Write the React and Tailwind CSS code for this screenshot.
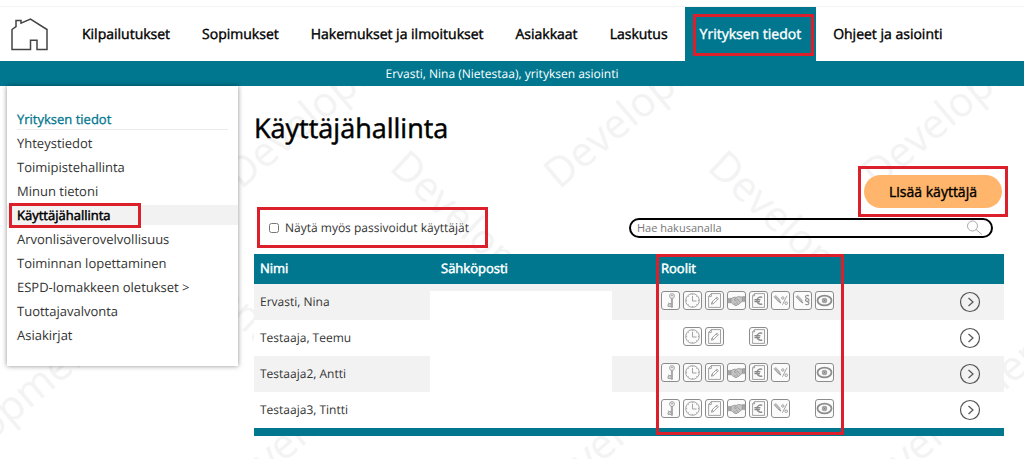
import React from "react";

const NAV = [
  "Kilpailutukset",
  "Sopimukset",
  "Hakemukset ja ilmoitukset",
  "Asiakkaat",
  "Laskutus",
  "Yrityksen tiedot",
  "Ohjeet ja asiointi",
];

const SIDE = [
  "Yhteystiedot",
  "Toimipistehallinta",
  "Minun tietoni",
  "Käyttäjähallinta",
  "Arvonlisäverovelvollisuus",
  "Toiminnan lopettaminen",
  "ESPD-lomakkeen oletukset >",
  "Tuottajavalvonta",
  "Asiakirjat",
];

const USERS = [
  { name: "Ervasti, Nina", roles: [1, 1, 1, 1, 1, 1, 1, 1] },
  { name: "Testaaja, Teemu", roles: [0, 1, 1, 0, 1, 0, 0, 0] },
  { name: "Testaaja2, Antti", roles: [1, 1, 1, 1, 1, 1, 0, 1] },
  { name: "Testaaja3, Tintti", roles: [1, 1, 1, 1, 1, 1, 0, 1] },
];

const PENCIL = (
  <g>
    <path d="m3.600 5 4.800 5.200" strokeWidth="2.400" stroke="#b8b8b8" />
    <path d="m8 10.200 2 1.800" strokeWidth="1.200" />
    <path d="m2.800 5.600 5 5.400M4.600 4.200l5 5.400" strokeWidth=".5" />
  </g>
);

const ROLE_ICONS = [
  <g key="key">
    <circle cx="11" cy="5" r="2.400" />
    <circle cx="11" cy="4.600" r=".6" />
    <path d="M10.400 7.400v9M11.400 7.400v9M10.400 16.400h1M10.200 12.600H7.600v-1M10.200 15.400H7v-2l1.400.8 1.600-.6" />
  </g>,
  <g key="clock">
    <circle cx="9.500" cy="9.500" r="6.800" />
    <path d="M9.500 5v5h4M9.500 3.200v.9M9.500 14.900v.9M3.200 9.500h.9M14.900 9.500h.9M5 5l.6.6M14 5l-.6.6M5 14l.6-.6M14 14l-.6-.6" />
  </g>,
  <g key="document">
    <path d="M6.300 2.600h9.200v13.800H3.600V5.400zM6.300 2.600v2.800H3.600" />
    <path d="m6.400 13.200.6-2.200 4.800-4.800 1.600 1.500-4.900 4.900zM7 11l1.500 1.600M11 7l1.600 1.600" />
  </g>,
  <g key="handshake">
    <path d="M.8 7.400h3.200v4.400H.8zM15.400 5.600h2.800v5h-2.800z" fill="#a8a8a8" strokeWidth=".5" />
    <path
      d="m4 7.600 3-1.400 2.200.2L11.600 5.400l3.800.8v4l-2 1.600-1.600 1.600-1.400.6-1.400.8-1.800-.8-1.600-1.200L4 11.400z"
      fill="#c4c4c4"
      strokeWidth=".7"
    />
    <path d="M9.400 6.600 7.200 9c1 1 2.200.4 3-.6l3.200 3M9 10.800l2.400 2.200M7 11.600l2 2" strokeWidth=".7" />
  </g>,
  <g key="euro">
    <path d="M5.600 2.600h9.900v13.800H3.600V4.800zM5.600 2.600v2.200H3.600" />
    <path d="M13.200 6.400a3.600 3.600 0 1 0 0 6.400M5.400 8.800h6M5.400 10.600h5.600" strokeWidth="1.400" />
  </g>,
  <g key="percent">
    {PENCIL}
    <path d="m16 4.800-4.600 9" />
    <circle cx="11.800" cy="7" r="1.200" />
    <circle cx="15.200" cy="12.200" r="1.300" />
  </g>,
  <g key="section">
    {PENCIL}
    <path
      d="M15.800 5.200c-.6-1.200-3.400-1-3.400.6 0 1.600 3.700 1.500 3.700 3.400 0 1.500-3.700 1.700-3.700-.1 0-1 .8-1.400 1.800-1.500M12.400 13c.6 1.200 3.600 1 3.600-.7 0-1.500-3.600-1.500-3.600-3.200"
      strokeWidth="1.100"
    />
  </g>,
  <g key="eye">
    <ellipse cx="9.500" cy="9.500" rx="7" ry="4.800" strokeWidth="1.800" />
    <rect x="7.400" y="7.400" width="4.200" height="4.200" rx="1" fill="#b0b0b0" strokeWidth=".8" />
    <path d="m8.500 8.500 2 2M10.500 8.500l-2 2" stroke="#777" />
  </g>,
];

function RoleIcon({ index }) {
  return (
    <svg viewBox="0 0 19 19" className="size-[19px]" fill="none" stroke="#8c8c8c" strokeWidth=".8">
      <rect x=".5" y=".5" width="18" height="18" rx="2.500" fill="#fbfbfb" strokeWidth="1" />
      {ROLE_ICONS[index]}
    </svg>
  );
}

function Watermark() {
  const columns = [0, 1, 2, 3];
  const rows = [0, 1];
  return (
    <svg aria-hidden="true" className="pointer-events-none absolute inset-0 size-full" fill="#f3f3f3">
      {rows.map((r) =>
        columns.map((c) => (
          <g key={`${r}-${c}`} className="text-[41px]">
            <text transform={`translate(${241 + (c - r) * 318 - r * 14} ${190 + r * 320}) rotate(-40)`}>Development</text>
            {r === 0 && <text transform={`translate(${70 + c * 318} 169) rotate(43)`}>Development</text>}
          </g>
        ))
      )}
    </svg>
  );
}

export default function App() {
  return (
    <div className="relative min-h-screen overflow-hidden bg-white font-['Open_Sans','Noto_Sans',sans-serif] text-[13px] text-[#333] [text-rendering:geometricPrecision]">
      <Watermark />
      <header className="relative bg-white pt-1.5">
        <nav className="flex h-[55px] items-stretch border-t border-[#f4f4f4] pl-2.5">
          <a href="#koti" aria-label="Etusivu" className="mr-[19px] flex w-[38px] items-center">
            <svg viewBox="0 0 38 34" className="w-[38px]" fill="none" stroke="#444" strokeWidth="1.500">
              <path d="M2 32.500V12.500L6 9.500V3.500h5v2.600L20.500 2 37 12.500v20H27v-9.300h-6.500v9.300z" />
            </svg>
          </a>
          <ul className="flex gap-0.5 text-[14px] text-black [-webkit-text-stroke:0.4px]">
            {NAV.map((label) => {
              const active = label === "Yrityksen tiedot";
              return (
                <li key={label} className={active ? "relative flex bg-[#00778f] text-white" : "flex"}>
                  <a href="#valikko" className="flex items-center px-[15px] whitespace-nowrap">
                    {label}
                  </a>
                  {active && <span className="pointer-events-none absolute top-[7px] right-0.5 bottom-[5px] left-2 border-[3px] border-[#dc202b]" />}
                </li>
              );
            })}
          </ul>
        </nav>
        <p className="h-[25px] bg-[#00778f] pr-5 text-center text-[12px] leading-[25px] text-white">
          Ervasti, Nina (Nietestaa), yrityksen asiointi
        </p>
      </header>

      <div className="relative flex items-start gap-4 pr-5 pl-[7px]">
        <aside className="w-[231px] shrink-0 bg-white pt-[23px] pb-[19px] shadow-[0_0_5px_rgba(0,0,0,0.45)]">
          <h2 className="mx-2.5 h-[21px] border-b border-[#ececec] leading-[21px] text-[#00778f] [-webkit-text-stroke:0.3px]">
            Yrityksen tiedot
          </h2>
          <ul className="pt-px">
            {SIDE.map((label) => {
              const active = label === "Käyttäjähallinta";
              return (
                <li key={label} className="relative flex h-6 items-center">
                  <a
                    href="#sivu"
                    className={
                      active
                        ? "w-full bg-[#f2f2f2] px-2.5 leading-5 text-black [-webkit-text-stroke:0.5px]"
                        : "w-full px-2.5 leading-5"
                    }
                  >
                    {label}
                  </a>
                  {active && (
                    <span className="pointer-events-none absolute top-0 left-0.5 h-[25px] w-[132px] border-[3px] border-[#dc202b]" />
                  )}
                </li>
              );
            })}
          </ul>
        </aside>

        <main className="min-w-0 flex-1">
          <h1 className="pt-6 text-[27px] leading-9 text-black [-webkit-text-stroke:0.5px]">Käyttäjähallinta</h1>
          <div className="-mr-1 flex justify-end pt-5">
            <div className="border-[3px] border-[#dc202b] px-[3px] py-1.5">
              <button type="button" className="h-[33px] w-[138px] rounded-full bg-[#ffb56b] text-[14px] text-black [-webkit-text-stroke:0.4px]">
                Lisää käyttäjä
              </button>
            </div>
          </div>
          <div className="-mt-2.5 flex items-center justify-between pr-[11px] pl-[3px]">
            <label className="flex h-[41px] w-[231px] items-center gap-1.5 border-[3px] border-[#dc202b] pl-[9px] text-[12px]">
              <input type="checkbox" className="size-[10px]" />
              Näytä myös passivoidut käyttäjät
            </label>
            <div className="relative flex">
              <input
                type="text"
                aria-label="Haku"
                placeholder="Hae hakusanalla"
                className="h-5 w-[364px] rounded-full border-2 border-black bg-transparent pr-8 pl-1.5 text-[11px] placeholder:text-[#777]"
              />
              <svg viewBox="0 0 17 16" className="absolute top-0.5 right-2.5 w-[17px]" fill="none" stroke="#aaa">
                <circle cx="6.500" cy="6" r="5" />
                <path d="m10 9.500 6 5" />
              </svg>
            </div>
          </div>

          <table className="mt-1.5 w-full table-fixed border-b-8 border-[#00778f] bg-white">
            <colgroup>
              <col className="w-[176px]" />
              <col className="w-[225px]" />
              <col />
              <col className="w-[68px]" />
            </colgroup>
            <thead>
              <tr className="h-[30px] bg-[#00778f] text-left text-white [-webkit-text-stroke:0.5px]">
                <th className="pl-1.5 font-normal">Nimi</th>
                <th className="pl-[11px] font-normal">Sähköposti</th>
                <th className="relative pl-1.5 font-normal">
                  Roolit
                  <span className="pointer-events-none absolute top-0 left-px z-10 h-[181px] w-[188px] border-[3px] border-[#dc202b]" />
                </th>
                <th aria-label="Avaa" />
              </tr>
            </thead>
            <tbody className="text-[12px]">
              {USERS.map((user, i) => (
                <tr key={user.name} className={i % 2 === 0 ? "h-9 bg-[#f2f2f2]" : "h-9 bg-white"}>
                  <td className="pl-1.5">{user.name}</td>
                  <td className="p-0">
                    <div className={i === 0 ? "mt-[7px] h-[29px] w-[182px] bg-white" : "h-9 w-[182px] bg-white"} />
                  </td>
                  <td className="p-0 pl-1.5">
                    <div className="flex gap-[3px] pb-1">
                      {user.roles.map((on, n) =>
                        on ? <RoleIcon key={n} index={n} /> : <span key={n} className="size-[19px]" />
                      )}
                    </div>
                  </td>
                  <td className="p-0">
                    <button type="button" aria-label={`Avaa ${user.name}`} className="ml-[23px] block">
                      <svg viewBox="0 0 22 22" className="size-[22px]" fill="none" stroke="#555" strokeWidth="1.200">
                        <circle cx="11" cy="11" r="9.500" />
                        <path d="m9.500 7 4.500 4-4.500 4" />
                      </svg>
                    </button>
                  </td>
                </tr>
              ))}
            </tbody>
          </table>
        </main>
      </div>
    </div>
  );
}
